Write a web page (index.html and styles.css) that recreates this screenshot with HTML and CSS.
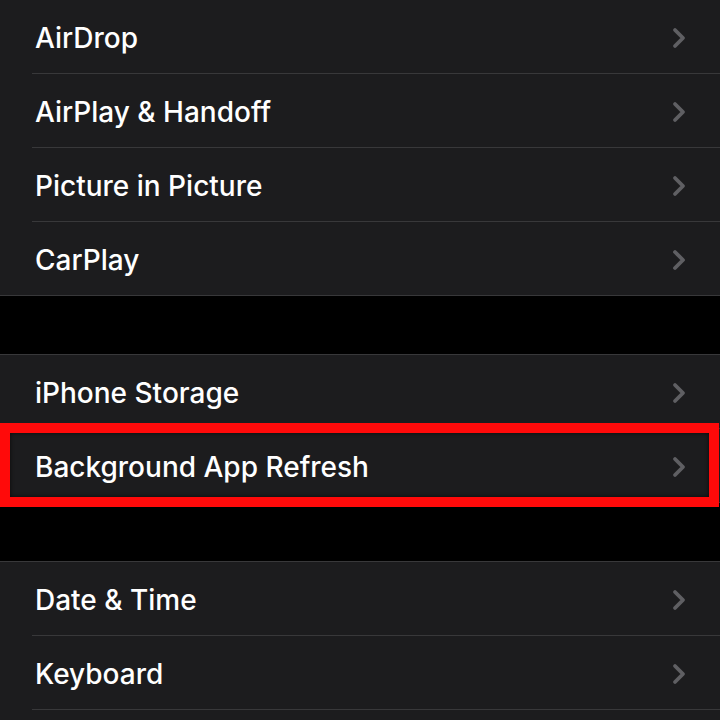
FILE: index.html
```html
<!DOCTYPE html>
<html lang="en">
<head>
  <meta charset="UTF-8" />
  <meta name="viewport" content="width=device-width, initial-scale=1.0" />
  <title>General</title>
  <link rel="stylesheet" href="styles.css">
</head>
<body>

  <!-- Sharing group -->
  <div class="group first">
    <div class="row"><span class="label">AirDrop</span><svg class="chevron" viewBox="0 0 14 22"><path d="M3 3 L11 11 L3 19" /></svg></div>
    <div class="row"><span class="label">AirPlay &amp; Handoff</span><svg class="chevron" viewBox="0 0 14 22"><path d="M3 3 L11 11 L3 19" /></svg></div>
    <div class="row"><span class="label">Picture in Picture</span><svg class="chevron" viewBox="0 0 14 22"><path d="M3 3 L11 11 L3 19" /></svg></div>
    <div class="row"><span class="label">CarPlay</span><svg class="chevron" viewBox="0 0 14 22"><path d="M3 3 L11 11 L3 19" /></svg></div>
  </div>

  <!-- Storage group -->
  <div class="group">
    <div class="row"><span class="label">iPhone Storage</span><svg class="chevron" viewBox="0 0 14 22"><path d="M3 3 L11 11 L3 19" /></svg></div>
    <div class="row highlighted"><span class="label">Background App Refresh</span><svg class="chevron" viewBox="0 0 14 22"><path d="M3 3 L11 11 L3 19" /></svg></div>
  </div>

  <!-- Locale group -->
  <div class="group">
    <div class="row"><span class="label">Date &amp; Time</span><svg class="chevron" viewBox="0 0 14 22"><path d="M3 3 L11 11 L3 19" /></svg></div>
    <div class="row"><span class="label">Keyboard</span><svg class="chevron" viewBox="0 0 14 22"><path d="M3 3 L11 11 L3 19" /></svg></div>
    <div class="row"></div>
  </div>

</body>
</html>
```

FILE: styles.css
```css
body {
  background: #000;
  color: #fff;
  font-family: Inter, 'Noto Sans', Arial, sans-serif;
  margin: 0;
  padding: 0;
  height: 720px;
  overflow: hidden;
}
.group {
  background: #1c1c1e;
  border-top: 1px solid #38383a;
  border-bottom: 1px solid #38383a;
  margin-bottom: 58px;
}
.group.first {
  margin-top: -1px;
}
/* One settings cell */
.row {
  height: 73px;
  box-sizing: border-box;
  display: flex;
  align-items: center;
  justify-content: space-between;
  padding: 3px 34px 0 35px;
  position: relative;
}
.row + .row {
  border-top: 1px solid transparent;
  height: 74px;
}
.row + .row::before {
  content: "";
  position: absolute;
  top: -1px;
  left: 32px;
  right: 0;
  height: 1px;
  background: #38383a;
}
.label {
  font-size: 28px;
  font-weight: 500;
}
.chevron {
  width: 14px;
  height: 22px;
  fill: none;
  stroke: #5f5f63;
  stroke-width: 3.8;
  stroke-linecap: round;
  stroke-linejoin: round;
}
/* Red annotation frame */
.highlighted::after {
  content: "";
  position: absolute;
  top: -6px;
  bottom: -5px;
  left: 0;
  right: 1px;
  border: 10px solid #ff0a0a;
  box-shadow: inset 0 0 4px rgba(0,0,0,0.7);
}
```
